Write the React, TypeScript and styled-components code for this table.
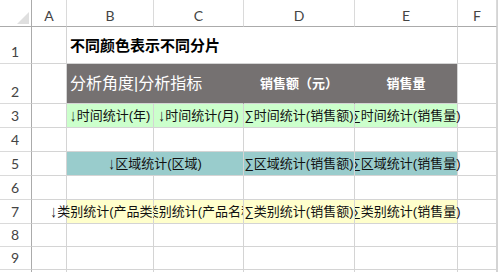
import React from "react";
import styled, { createGlobalStyle } from "styled-components";

const Global = createGlobalStyle`
  html, body { margin: 0; padding: 0; background: #fff; }
  #root { width: 498px; height: 272px; overflow: hidden; }
`;

const GRID = "#d4d4d4";
const HEAD_LINE = "#ababab";
const HEAD_SEP = "#dadada";

const Sheet = styled.div`
  display: grid;
  width: 498px;
  height: 272px;
  overflow: hidden;
  grid-template-columns: 32px 35px 87px 90px 111px 103px 39px 1fr;
  grid-template-rows: 27px 37px 40px 24px 24px 24px 24px 24px 23px 23px 1fr;
  font-family: "Liberation Sans", "Noto Sans CJK SC", sans-serif;
  background: #fff;
`;

const Corner = styled.div`
  position: relative;
  border-right: 1px solid ${HEAD_LINE};
  border-bottom: 1px solid ${HEAD_LINE};
  background: #fff;
`;

const CornerTriangle = styled.svg`
  position: absolute;
  left: 17px;
  top: 12px;
`;

const ColHead = styled.div`
  display: flex;
  align-items: flex-end;
  justify-content: center;
  padding-bottom: 2px;
  box-sizing: border-box;
  border-right: 1px solid ${HEAD_SEP};
  border-bottom: 1px solid ${HEAD_LINE};
  font-family: Lato, "Liberation Sans", sans-serif;
  font-size: 14px;
  color: #444;
`;

const RowHead = styled.div`
  display: flex;
  align-items: flex-end;
  justify-content: center;
  padding-bottom: 3px;
  box-sizing: border-box;
  border-right: 1px solid ${HEAD_LINE};
  border-bottom: 1px solid ${HEAD_SEP};
  font-family: Lato, "Liberation Sans", sans-serif;
  font-size: 14px;
  color: #444;
  padding-right: 1px;
  overflow: hidden;
`;

type Spill = "left" | "right" | "none";

const Cell = styled.div<{
  $fill?: string;
  $justify?: "flex-start" | "center";
  $span?: number;
  $line?: string;
  $spill?: Spill;
  $pad?: number;
}>`
  grid-column: span ${(p) => p.$span ?? 1};
  background: ${(p) => p.$fill ?? "#fff"};
  border-right: 1px solid ${(p) => p.$line ?? GRID};
  border-bottom: 1px solid ${GRID};
  box-sizing: border-box;
  display: flex;
  align-items: center;
  justify-content: ${(p) => p.$justify ?? "center"};
  padding-left: ${(p) => p.$pad ?? 0}px;
  min-width: 0;
  white-space: nowrap;
  overflow: ${(p) => (p.$spill && p.$spill !== "none" ? "visible" : "hidden")};
  clip-path: ${(p) =>
    p.$spill === "left"
      ? "inset(0 0 0 -60px)"
      : p.$spill === "right"
      ? "inset(0 -60px 0 0)"
      : "none"};
  position: relative;
`;

const Text = styled.span<{ $size?: number; $bold?: boolean; $color?: string }>`
  flex-shrink: 0;
  font-size: ${(p) => p.$size ?? 13}px;
  font-weight: ${(p) => (p.$bold ? 700 : 400)};
  color: ${(p) => p.$color ?? "#111"};
  line-height: 1;
`;

const Arrow = styled.span`
  display: inline-block;
  font-weight: 700;
  transform: scaleY(1.3);
  margin-right: 0.5px;
`;

const Blank = styled.div`
  border-right: 1px solid ${GRID};
  border-bottom: 1px solid ${GRID};
`;

const DARK = "#757171";
const GREEN = "#ccffcc";
const TEAL = "#99cccc";
const YELLOW = "#ffffcc";

const COLS = ["A", "B", "C", "D", "E", "F"];

function Blanks({ n }: { n: number }) {
  return (
    <>
      {Array.from({ length: n }).map((_, i) => (
        <Blank key={i} />
      ))}
    </>
  );
}

function EmptyRow({ num }: { num?: number }) {
  return (
    <>
      <RowHead>{num}</RowHead>
      <Blanks n={7} />
    </>
  );
}

function Down({ children }: { children: React.ReactNode }) {
  return (
    <Text>
      <Arrow>↓</Arrow>
      {children}
    </Text>
  );
}

export default function App() {
  return (
    <>
      <Global />
      <Sheet>
        <Corner>
          <CornerTriangle width="12" height="12" viewBox="0 0 12 12">
            <polygon points="12,0 12,12 0,12" fill="#dfdfdf" />
          </CornerTriangle>
        </Corner>
        {COLS.map((c) => (
          <ColHead key={c}>{c}</ColHead>
        ))}
        <Blank />

        {/* Row 1 */}
        <RowHead>1</RowHead>
        <Blank />
        <Cell $span={4} $justify="flex-start" $pad={3}>
          <Text $size={15} $bold $color="#000">不同颜色表示不同分片</Text>
        </Cell>
        <Blank />
        <Blank />

        {/* Row 2 */}
        <RowHead>2</RowHead>
        <Blank />
        <Cell $span={2} $fill={DARK} $line={DARK} $justify="flex-start" $pad={3}>
          <Text $size={16} $color="#fff">分析角度|分析指标</Text>
        </Cell>
        <Cell $fill={DARK} $line={DARK}>
          <Text $bold $color="#fff">销售额（元）</Text>
        </Cell>
        <Cell $fill={DARK}>
          <Text $bold $color="#fff">销售量</Text>
        </Cell>
        <Blank />
        <Blank />

        {/* Row 3 */}
        <RowHead>3</RowHead>
        <Blank />
        <Cell $fill={GREEN}>
          <Down>时间统计(年)</Down>
        </Cell>
        <Cell $fill={GREEN}>
          <Down>时间统计(月)</Down>
        </Cell>
        <Cell $fill={GREEN}>
          <Text>∑时间统计(销售额)</Text>
        </Cell>
        <Cell $fill={GREEN} $spill="right">
          <Text>∑时间统计(销售量)</Text>
        </Cell>
        <Blank />
        <Blank />

        <EmptyRow num={4} />

        {/* Row 5 */}
        <RowHead>5</RowHead>
        <Blank />
        <Cell $span={2} $fill={TEAL}>
          <Down>区域统计(区域)</Down>
        </Cell>
        <Cell $fill={TEAL}>
          <Text>∑区域统计(销售额)</Text>
        </Cell>
        <Cell $fill={TEAL} $spill="right">
          <Text>∑区域统计(销售量)</Text>
        </Cell>
        <Blank />
        <Blank />

        <EmptyRow num={6} />

        {/* Row 7 */}
        <RowHead>7</RowHead>
        <Blank />
        <Cell $fill={YELLOW} $spill="left">
          <Down>类别统计(产品类别)</Down>
        </Cell>
        <Cell $fill={YELLOW}>
          <Down>类别统计(产品名称)</Down>
        </Cell>
        <Cell $fill={YELLOW}>
          <Text>∑类别统计(销售额)</Text>
        </Cell>
        <Cell $fill={YELLOW} $spill="right">
          <Text>∑类别统计(销售量)</Text>
        </Cell>
        <Blank />
        <Blank />

        <EmptyRow num={8} />
        <EmptyRow num={9} />
        <EmptyRow />
      </Sheet>
    </>
  );
}
